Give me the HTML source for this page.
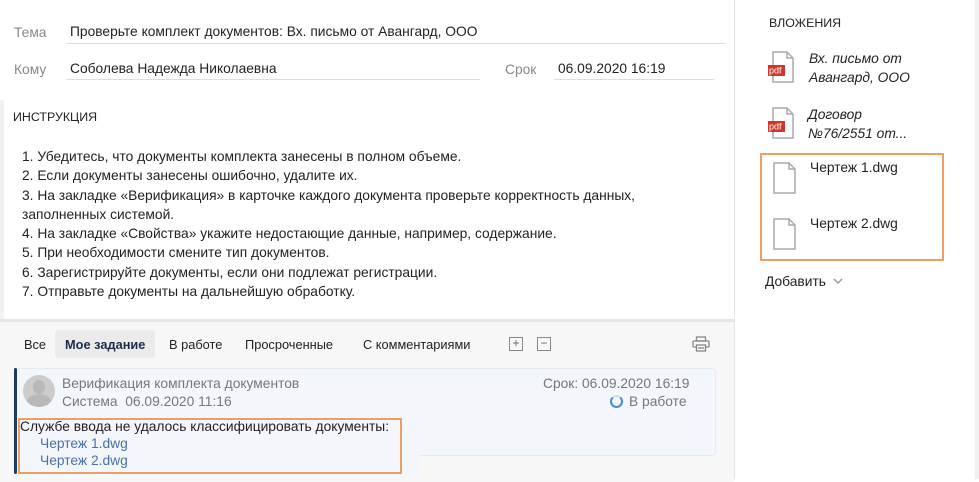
<!DOCTYPE html><html><head><meta charset="utf-8"><style>
body{margin:0;width:979px;height:479px;overflow:hidden;background:#fff;font-family:"Liberation Sans",sans-serif;font-size:13.8px;color:#222;position:relative}
.a{position:absolute;white-space:nowrap}
.lbl{color:#888}
.ln{position:absolute;height:1px;background:#ddd}
.g{color:#777}
.lk{color:#4a6fa8}
.t{font-size:12.8px}
</style></head><body>
<div class="a lbl" style="left:14px;top:25px">Тема</div>
<div class="a" style="left:70px;top:24px">Проверьте комплект документов: Вх. письмо от Авангард, ООО</div>
<div class="ln" style="left:66px;top:43px;width:660px"></div>
<div class="a lbl" style="left:14px;top:62px">Кому</div>
<div class="a" style="left:70px;top:61px">Соболева Надежда Николаевна</div>
<div class="ln" style="left:66px;top:79px;width:414px"></div>
<div class="a lbl" style="left:505px;top:62px">Срок</div>
<div class="a" style="left:558px;top:61px">06.09.2020 16:19</div>
<div class="ln" style="left:554px;top:79px;width:160px"></div>
<div class="a" style="left:0;top:100px;width:4px;height:220px;background:#f2f2f2"></div>
<div class="a" style="left:13px;top:110px;font-size:12.4px">ИНСТРУКЦИЯ</div>
<div class="a" style="left:22px;top:147px;line-height:19.3px;font-size:13.8px">1. Убедитесь, что документы комплекта занесены в полном объеме.<br>2. Если документы занесены ошибочно, удалите их.<br>3. На закладке «Верификация» в карточке каждого документа проверьте корректность данных,<br>заполненных системой.<br>4. На закладке «Свойства» укажите недостающие данные, например, содержание.<br>5. При необходимости смените тип документов.<br>6. Зарегистрируйте документы, если они подлежат регистрации.<br>7. Отправьте документы на дальнейшую обработку.</div>
<div class="a" style="left:0;top:319px;width:734px;height:160px;background:#f7f7f7;border-top:3px solid #e6e6e6"></div>
<div class="a" style="left:734px;top:0;width:1px;height:479px;background:#e4e4e4"></div>
<div class="a" style="left:975px;top:0;width:4px;height:479px;background:#f0f0f0"></div>
<div class="a t" style="left:24px;top:337px">Все</div>
<div class="a" style="left:55px;top:330px;height:28px;background:#ebebeb;width:100px;border-radius:3px"></div>
<div class="a t" style="left:65px;top:337px;font-weight:bold;color:#1c2d4a">Мое задание</div>
<div class="a t" style="left:169px;top:337px">В работе</div>
<div class="a t" style="left:245px;top:337px">Просроченные</div>
<div class="a t" style="left:363px;top:337px">С комментариями</div>
<div class="a" style="left:509px;top:337px;width:12px;height:12px;border:1px solid #888;color:#666;font-size:12px;line-height:11px;text-align:center">+</div>
<div class="a" style="left:537px;top:337px;width:12px;height:12px;border:1px solid #888;color:#666;font-size:12px;line-height:11px;text-align:center">−</div>
<svg class="a" style="left:692px;top:336px" width="18" height="16" viewBox="0 0 18 16" fill="none" stroke="#888" stroke-width="1.3"><rect x="4.5" y="1" width="9" height="4"/><rect x="1" y="5" width="16" height="6" rx="1"/><rect x="4.5" y="9" width="9" height="6" fill="#f7f7f7"/><line x1="6" y1="12" x2="12" y2="12"/></svg>
<div class="a" style="left:14px;top:368px;width:700px;height:86px;background:#f3f6fb;border:1px solid #e6ebf2;border-radius:4px"></div>
<div class="a" style="left:14px;top:418px;width:406px;height:57px;background:#f3f6fb"></div>
<div class="a" style="left:14px;top:368px;width:3px;height:106px;background:#1e3a64;border-radius:2px"></div>
<div class="a" style="left:23px;top:375px;width:32px;height:32px;border-radius:50%;background:#ccc;overflow:hidden"><div style="position:absolute;left:10px;top:5px;width:12px;height:14px;border-radius:50%;background:#b9b9b9"></div><div style="position:absolute;left:3px;top:19px;width:26px;height:20px;border-radius:50%;background:#b9b9b9"></div></div>
<div class="a g" style="left:62px;top:376px">Верификация комплекта документов</div>
<div class="a g" style="left:62px;top:394px">Система&nbsp;&nbsp;06.09.2020 11:16</div>
<div class="a g" style="left:543px;top:376px">Срок: 06.09.2020 16:19</div>
<div class="a" style="left:610px;top:395px;width:9px;height:9px;border:2px solid #4a8ad6;border-radius:50%;border-top-color:#c7dcf5"></div>
<div class="a g" style="left:629px;top:394px">В работе</div>
<div class="a" style="left:20px;top:419px">Службе ввода не удалось классифицировать документы:</div>
<div class="a lk" style="left:40px;top:436px">Чертеж 1.dwg</div>
<div class="a lk" style="left:40px;top:453px">Чертеж 2.dwg</div>
<div class="a" style="left:18px;top:418px;width:380px;height:52px;border:2px solid #e8a064"></div>
<div class="a" style="left:769px;top:16px;font-size:12.4px">ВЛОЖЕНИЯ</div>
<svg class="a" style="left:768px;top:51px" width="30" height="32"><path d="M5 1H19L25 7V31H5Z" fill="#fff" stroke="#aaa" stroke-width="1.5"/><path d="M19 1V7H25" fill="none" stroke="#aaa" stroke-width="1.5"/><rect x="0" y="14" width="17" height="11" fill="#d0362c"/><text x="1" y="22.5" font-size="9" fill="#fff" font-family="Liberation Sans">pdf</text></svg>
<div class="a" style="left:809px;top:49px;font-style:italic;line-height:19px">Вх. письмо от<br>Авангард, ООО</div>
<svg class="a" style="left:768px;top:107px" width="30" height="32"><path d="M5 1H19L25 7V31H5Z" fill="#fff" stroke="#aaa" stroke-width="1.5"/><path d="M19 1V7H25" fill="none" stroke="#aaa" stroke-width="1.5"/><rect x="0" y="14" width="17" height="11" fill="#d0362c"/><text x="1" y="22.5" font-size="9" fill="#fff" font-family="Liberation Sans">pdf</text></svg>
<div class="a" style="left:808px;top:105px;font-style:italic;line-height:19px">Договор<br>№76/2551 от...</div>
<div class="a" style="left:760px;top:153px;width:180px;height:104px;border:2px solid #e8a064"></div>
<svg class="a" style="left:773px;top:162px" width="24" height="32"><path d="M1 1H16L22 7V31H1Z" fill="#fff" stroke="#aaa" stroke-width="1.5"/><path d="M16 1V7H22" fill="none" stroke="#aaa" stroke-width="1.5"/></svg>
<div class="a" style="left:810px;top:160px">Чертеж 1.dwg</div>
<svg class="a" style="left:773px;top:218px" width="24" height="32"><path d="M1 1H16L22 7V31H1Z" fill="#fff" stroke="#aaa" stroke-width="1.5"/><path d="M16 1V7H22" fill="none" stroke="#aaa" stroke-width="1.5"/></svg>
<div class="a" style="left:810px;top:216px">Чертеж 2.dwg</div>
<div class="a" style="left:765px;top:274px">Добавить</div>
<svg class="a" style="left:833px;top:278px" width="10" height="7"><path d="M1 1L5 5L9 1" fill="none" stroke="#999" stroke-width="1.5"/></svg>
</body></html>
